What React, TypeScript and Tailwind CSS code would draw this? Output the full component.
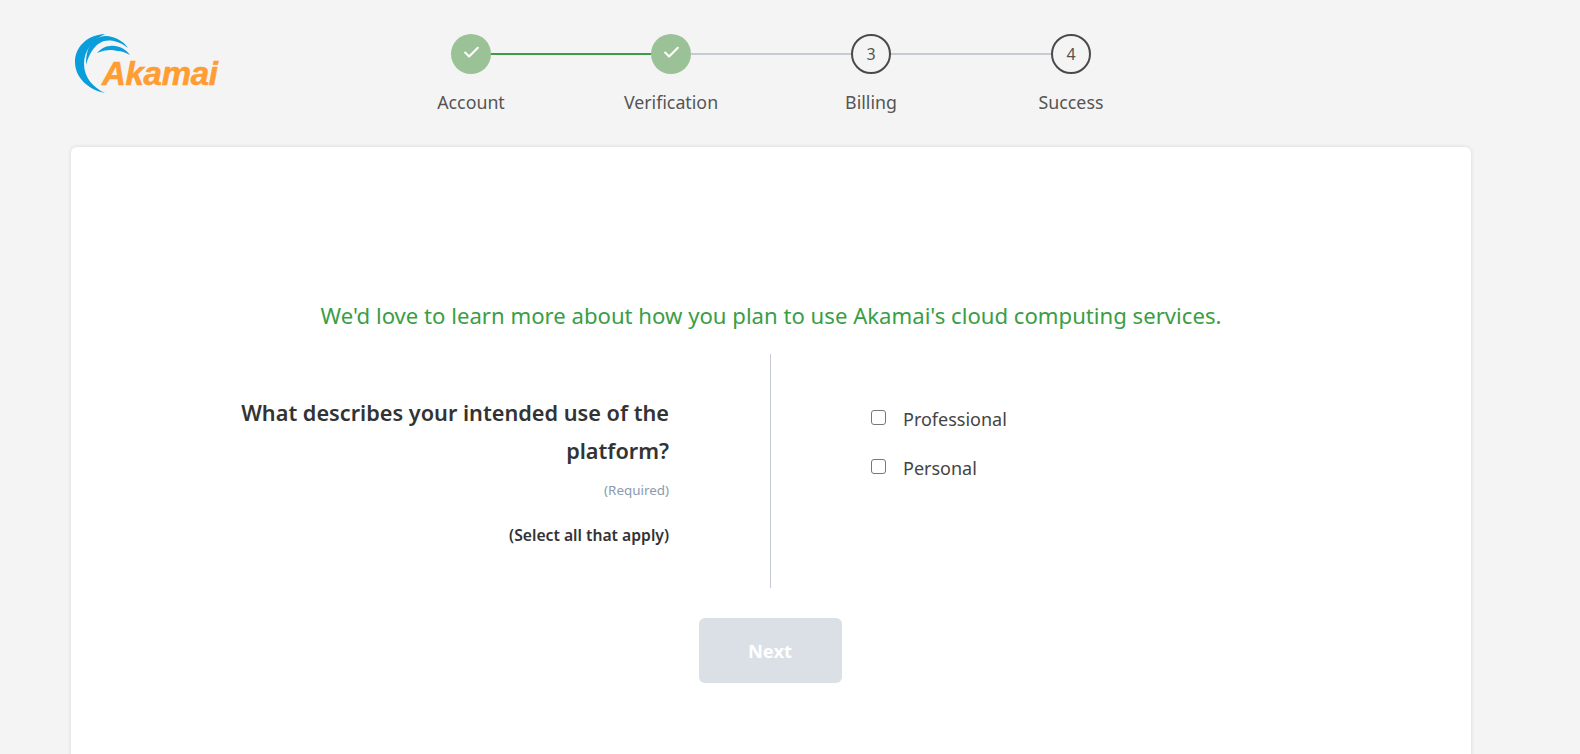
import React from 'react';
import { Check } from 'lucide-react';

const steps = [
  { label: 'Account', done: true },
  { label: 'Verification', done: true },
  { label: 'Billing', done: false, n: 3 },
  { label: 'Success', done: false, n: 4 },
];

function Logo() {
  return (
    <div className="relative w-[146px] h-[62px]">
      <svg viewBox="0 0 146 62" className="absolute left-0 top-0 w-[146px] h-[62px]">
        <path d="M31 0 C12 1 1 14 1 28 C1 44 15 56 31 59 C20 54 10 44 10 30 C10 17 18 6 31 0 Z" fill="#0a9ddb" />
        <path d="M12 31 C12 20 14 12 19 7 C25 2 32 1 38 3 C45 5 51 9 54 14 C50 11 47 9 43 8 C36 6 31 6 26 9 C20 12 15 20 12 31 Z" fill="#0a9ddb" />
        <path d="M23 19 C27 15 31 12 36 12 C44 11 52 15 56 21 C52 19 48 17 43 17 C38 15 30 16 23 19 Z" fill="#0a9ddb" />
      </svg>
      <span className="absolute left-[28px] top-[20px] font-['Liberation_Sans',sans-serif] font-bold italic text-[33px] leading-[40px] tracking-[-0.3px] text-[#ff9d33] [-webkit-text-stroke:0.6px_#ff9d33]">
        Akamai
      </span>
    </div>
  );
}

function Stepper() {
  return (
    <div className="flex">
      {steps.map((s, i) => (
        <div key={s.label} className="relative w-[200px] flex flex-col items-center">
          {i < 3 && (
            <div className={`absolute top-[19px] left-[100px] w-[200px] h-[2px] ${s.done && i === 0 ? 'bg-[#3a9e45]' : 'bg-[#c5cbd1]'}`} />
          )}
          {s.done ? (
            <div className="relative z-10 w-10 h-10 rounded-full bg-[#9bc296] flex items-center justify-center">
              <Check className="w-[19px] h-[19px] text-white -mt-1" strokeWidth={2.6} />
            </div>
          ) : (
            <div className="relative z-10 w-10 h-10 rounded-full border-2 border-[#4a4a4a] bg-[#f4f4f4] flex items-center justify-center text-[16px] text-[#555]">
              {s.n}
            </div>
          )}
          <div className="mt-[16px] text-[17.8px] leading-[24px] text-[#555]">{s.label}</div>
        </div>
      ))}
    </div>
  );
}

export default function App() {
  return (
    <div className="min-h-[754px] h-[754px] overflow-hidden bg-[#f4f4f4] font-['Noto_Sans',sans-serif]">
      <div className="flex h-[147px]">
        <div className="ml-[74px] mt-[34px] w-[297px]">
          <Logo />
        </div>
        <div className="mt-[34px]">
          <Stepper />
        </div>
      </div>
      <div className="ml-[71px] w-[1400px] h-[700px] bg-white rounded-md shadow-[0_0_4px_rgba(0,0,0,0.12)]">
        <div className="pt-[151px] text-center text-[22.15px] leading-[34px] text-[#3a9e45]">
          We'd love to learn more about how you plan to use Akamai's cloud computing services.
        </div>
        <div className="mt-[22px] flex h-[234px]">
          <div className="w-[700px] border-r border-[#c5cbd1] pr-[101px] pt-[40px] text-right">
            <div className="ml-auto w-[450px] text-[21.7px] leading-[38px] font-semibold text-[#333]">
              What describes your intended use of the platform?
            </div>
            <div className="mt-[10px] text-[13.4px] leading-[20px] text-[#8a9bb0]">(Required)</div>
            <div className="mt-[25px] text-[15.7px] leading-[20px] font-semibold text-[#333]">(Select all that apply)</div>
          </div>
          <div className="pl-[100px] pt-[53px] flex flex-col gap-[25px]">
            {['Professional', 'Personal'].map(label => (
              <label key={label} className="flex items-center h-[24px] text-[18px] text-[#444]">
                <span className="w-[15px] h-[15px] border border-[#777] rounded-[3px] bg-white -mt-[3px]" />
                <span className="ml-[17px]">{label}</span>
              </label>
            ))}
          </div>
        </div>
        <div className="mt-[30px] flex justify-center">
          <button className="mr-[2px] w-[143px] h-[65px] rounded-md bg-[#dae0e6] text-white text-[18.4px] font-bold">Next</button>
        </div>
      </div>
    </div>
  );
}
